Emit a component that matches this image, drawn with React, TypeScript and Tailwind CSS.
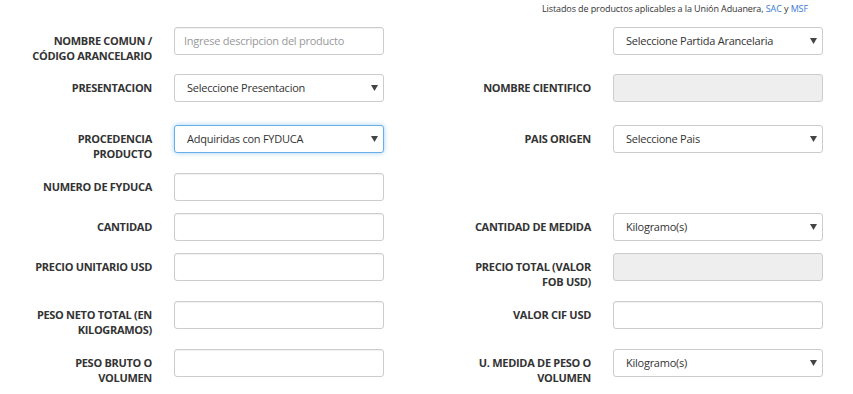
import React from "react";

type FieldProps =
  | { kind: "input"; placeholder?: string }
  | { kind: "select"; value: string; focused?: boolean }
  | { kind: "disabled" };

function Field(props: FieldProps) {
  if (props.kind === "input") {
    return (
      <div className="h-[28px] w-[210px] shrink-0 rounded-[3px] border border-[#cccccc] bg-white pl-[9px] text-[11px] leading-[26px] tracking-[-0.25px] text-[#999999] shadow-[inset_0_1px_1px_rgba(0,0,0,0.06)]">
        {props.placeholder ?? ""}
      </div>
    );
  }
  if (props.kind === "disabled") {
    return (
      <div className="h-[28px] w-[210px] shrink-0 rounded-[3px] border border-[#cccccc] bg-[#eeeeee]" />
    );
  }
  return (
    <div
      className={
        "relative h-[28px] w-[210px] shrink-0 rounded-[3px] border bg-white pl-[12px] text-[11px] leading-[26px] tracking-[-0.25px] text-[#333333] " +
        (props.focused
          ? "border-[#66afe9] shadow-[0_0_5px_rgba(102,175,233,0.6)]"
          : "border-[#cccccc]")
      }
    >
      {props.value}
      <svg
        className="absolute right-[5px] top-[10px]"
        width="7"
        height="6"
        viewBox="0 0 7 6"
      >
        <path d="M0 0 H7 L3.5 6 Z" fill="#444444" />
      </svg>
    </div>
  );
}

function Label({ text }: { text: string }) {
  return (
    <div className="w-[152px] shrink-0 pl-[24px] pt-[6px] text-right text-[11px] font-bold leading-[15px] tracking-[-0.3px] text-[#333333]">
      {text}
    </div>
  );
}

function Half({ label, field }: { label?: string; field?: FieldProps }) {
  return (
    <div className="flex w-[439px] shrink-0 gap-x-[22px]">
      <Label text={label ?? ""} />
      {field ? <Field {...field} /> : null}
    </div>
  );
}

function Row({
  left,
  right,
  className,
}: {
  left: { label?: string; field?: FieldProps };
  right: { label?: string; field?: FieldProps };
  className?: string;
}) {
  return (
    <div className={"flex items-start " + (className ?? "")}>
      <Half {...left} />
      <Half {...right} />
    </div>
  );
}

export default function App() {
  return (
    <div
      className="h-[394px] w-[853px] overflow-hidden bg-white"
      style={{ fontFamily: '"Open Sans", "Noto Sans", sans-serif' }}
    >
      <div className="flex h-[27px] justify-end pr-[45px] pt-[3px]">
        <span className="text-[9px] leading-[12px] tracking-[-0.1px] text-[#333333]">
          Listados de productos aplicables a la Unión Aduanera,{" "}
          <span className="text-[#3a7bd5]">SAC</span> y{" "}
          <span className="text-[#3a7bd5]">MSF</span>
        </span>
      </div>
      <div className="flex flex-col gap-y-[12px]">
        <Row
          left={{
            label: "NOMBRE COMUN / CÓDIGO ARANCELARIO",
            field: { kind: "input", placeholder: "Ingrese descripcion del producto" },
          }}
          right={{ field: { kind: "select", value: "Seleccione Partida Arancelaria" } }}
          className="-mb-[1px]"
        />
        <Row
          left={{ label: "PRESENTACION", field: { kind: "select", value: "Seleccione Presentacion" } }}
          right={{ label: "NOMBRE CIENTIFICO", field: { kind: "disabled" } }}
          className="mb-[11px]"
        />
        <Row
          left={{
            label: "PROCEDENCIA PRODUCTO",
            field: { kind: "select", value: "Adquiridas con FYDUCA", focused: true },
          }}
          right={{ label: "PAIS ORIGEN", field: { kind: "select", value: "Seleccione Pais" } }}
        />
        <Row
          left={{ label: "NUMERO DE FYDUCA", field: { kind: "input" } }}
          right={{}}
        />
        <Row
          left={{ label: "CANTIDAD", field: { kind: "input" } }}
          right={{ label: "CANTIDAD DE MEDIDA", field: { kind: "select", value: "Kilogramo(s)" } }}
        />
        <Row
          left={{ label: "PRECIO UNITARIO USD", field: { kind: "input" } }}
          right={{ label: "PRECIO TOTAL (VALOR FOB USD)", field: { kind: "disabled" } }}
        />
        <Row
          left={{ label: "PESO NETO TOTAL (EN KILOGRAMOS)", field: { kind: "input" } }}
          right={{ label: "VALOR CIF USD", field: { kind: "input" } }}
        />
        <Row
          left={{ label: "PESO BRUTO O VOLUMEN", field: { kind: "input" } }}
          right={{ label: "U. MEDIDA DE PESO O VOLUMEN", field: { kind: "select", value: "Kilogramo(s)" } }}
        />
      </div>
    </div>
  );
}
